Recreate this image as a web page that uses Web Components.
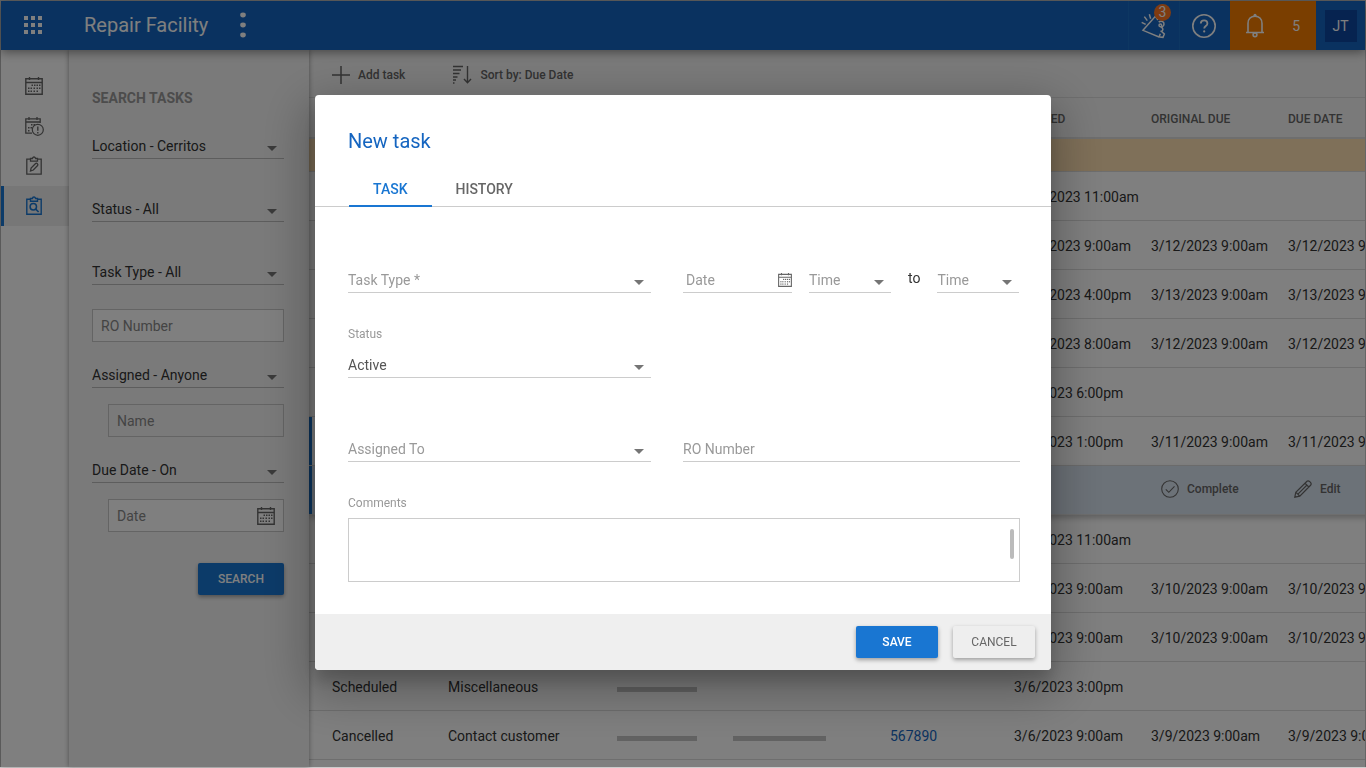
<!DOCTYPE html>
<html lang="en">
<head>
    <meta charset="utf-8">
    <meta name="viewport" content="width=device-width, initial-scale=1">
    <title>Repair Facility</title>
    <style>
        html, body {
            height: 100%;
            margin: 0;
            overflow: hidden;
            font-family: Roboto, "Liberation Sans", sans-serif;
            font-size: 14px;
            color: #333;
        }
    </style>
</head>
<body>
    <repair-app></repair-app>

    <script>
        const dots = (points) => points.map(([x, y]) => `<rect x="${x}" y="${y}" width="1.5" height="1.5" fill="currentColor" stroke="none"/>`).join('')

        // name: [viewBox, width, height, markup]
        const ICONS = {
            apps: ['0 0 18 18', 18, 18, [0, 7, 14].map(y => [0, 7, 14].map(x => `<rect x="${x}" y="${y}" width="4" height="4" fill="currentColor" stroke="none"/>`).join('')).join('')],
            more: ['0 0 6 26', 6, 26, '<g fill="currentColor" stroke="none"><ellipse cx="3" cy="3" rx="2.8" ry="2.4"/><ellipse cx="3" cy="13" rx="2.8" ry="2.4"/><ellipse cx="3" cy="23" rx="2.8" ry="2.4"/></g>'],
            megaphone: ['60 36 78 81', 26, 27, '<g stroke-width="4.5"><path d="M114 60 106 49 69 91l48 20 4-10"/><path d="M116 66c8-5 17-1 16 7 0 4-3 7-7 9 5 4 5 10-1 12l9 8-4 10-10-1"/><circle cx="121" cy="76" r="4"/><path d="m88 43 4 13M73 50l9 12M65 67l12 6"/></g>'],
            help: ['0 0 24 24', 24, 24, '<circle cx="12" cy="12" r="11.2" stroke-width="1.6"/><path d="M8.8 9.6c0-4.4 6.6-4.2 6.6-.2 0 2.6-3.2 2.6-3.2 5.2" stroke-width="1.8"/><circle cx="12.2" cy="17.4" r="1.1" fill="currentColor" stroke="none"/>'],
            bell: ['0 0 20 25', 20, 25, '<g stroke-width="1.6"><path d="M1 19.5h18M3 19V10.5C3 6 6 3.2 10 3.2S17 6 17 10.500V19"/><circle cx="10" cy="21.800" r="1.900"/></g><circle cx="10" cy="2.200" r="1.500" fill="currentColor" stroke="none"/>'],
            calendar: ['0 0 18 18', 18, 18, '<path d="M.8 1.800h16.400v15.400H.8zM.8 5.500h16.400M4.500 0v3M13.500 0v3" stroke-width="1.4"/>' + dots([[6.5, 7.5], [9, 7.5], [11.5, 7.5], [14, 7.5], [3, 10.5], [5.5, 10.5], [8.5, 10.5], [11.5, 10.5], [14, 10.5], [3, 13.5], [5.5, 13.5], [8.5, 13.5], [11.5, 13.5]])],
            calendarAlert: ['0 0 19 19', 19, 19, '<path d="M7 16.200H.8V1.800h14.400V6M.8 5h14.400M4 0v3M12 0v3" stroke-width="1.300"/>' + dots([[6, 7], [8.500, 7], [3, 10], [5.500, 10], [3, 13]]) + '<circle cx="12.800" cy="12.800" r="5.500" stroke-width="1.200"/><path d="M12.800 9.500v4.200M12.800 15v1.500" stroke-width="1.400"/>'],
            clipboardEdit: ['0 0 16 18', 16, 18, '<path d="M4.500 2.200H.8v15h14.400v-15h-3.700M4.500 1.500v2.700h7V1.500H9.500a1.500 1.500 0 0 0-3 0zM4.500 14l.6-3 4.500-4.500c1-1 3 1 2 2L7.300 13z" stroke-width="1.300"/>'],
            clipboardSearch: ['0 0 16 18', 16, 18, '<path d="M4.500 2.200H.8v15h14.400v-15h-3.700M4.500 1.500v2.700h7V1.500H9.500a1.500 1.500 0 0 0-3 0z" stroke-width="1.400"/><circle cx="7.300" cy="9.800" r="3.200" stroke-width="1.500"/><path d="m9.600 12 3 3" stroke-width="1.700"/>'],
            plus: ['0 0 18 18', 18, 18, '<path d="M9 0v18M0 9h18" stroke-width="1.500"/>'],
            sort: ['0 0 19 19', 19, 19, '<path d="M0 1.500h10M0 5h8M0 8.500h6.500M0 12h4.500M0 15h3M0 18h1.500" stroke-width="1.300"/><path d="M14.500 1v16.500M11 14l3.500 3.700L18 14" stroke-width="1.400"/>'],
            check: ['0 0 18 18', 18, 18, '<circle cx="9" cy="9" r="8.300" stroke-width="1.100"/><path d="m4.800 9.300 3 3 5.700-6" stroke-width="1.100"/>'],
            pencil: ['0 0 18 18', 18, 18, '<path d="m.8 17.200 1-5L13 1.200c1.600-1.400 5.200 2 3.800 3.800L5.800 16.200zM11 3.200l3.800 3.800M1.800 12.200l4 4M4.200 13.800 13 5" stroke-width="1.200"/>'],
            caret: ['0 0 10 5', 10, 5, '<path d="M0 0h10L5 5z" fill="currentColor" stroke="none"/>']
        }

        class AppIcon extends HTMLElement {
            constructor() {
                super()
                this.attachShadow({ mode: 'open' })
            }

            connectedCallback() {
                const [box, width, height, markup] = ICONS[this.getAttribute('name')]
                const size = Number(this.getAttribute('size')) || width
                this.shadowRoot.innerHTML = `
                    <style>
                        :host { display: inline-flex; flex: none; }
                        svg { display: block; fill: none; stroke: currentColor; overflow: visible; }
                    </style>
                    <svg viewBox="${box}" width="${size}" height="${size * height / width}" aria-hidden="true">${markup}</svg>
                `
            }
        }
        customElements.define('app-icon', AppIcon)

        class AppButton extends HTMLElement {
            constructor() {
                super()
                this.attachShadow({ mode: 'open' })
            }

            connectedCallback() {
                this.shadowRoot.innerHTML = `
                    <style>
                        :host { display: inline-flex; }
                        button {
                            min-width: var(--button-width, 82px);
                            height: 32px;
                            padding: 0 12px;
                            border: none;
                            border-radius: 2px;
                            background: #1976d2;
                            color: #fff;
                            font: 500 12px/16px Roboto, sans-serif;
                            box-shadow: 0 2px 4px rgba(0, 0, 0, 0.35);
                            cursor: pointer;
                        }
                        :host([plain]) button {
                            background: #eee;
                            color: #666;
                            font-weight: 400;
                        }
                    </style>
                    <button type="button"><slot></slot></button>
                `
            }
        }
        customElements.define('app-button', AppButton)

        class SelectField extends HTMLElement {
            constructor() {
                super()
                this.attachShadow({ mode: 'open' })
            }

            connectedCallback() {
                const label = this.getAttribute('label')
                const caption = this.hasAttribute('caption')
                this.shadowRoot.innerHTML = `
                    <style>
                        :host { display: block; }
                        label { display: block; font-size: 12px; line-height: 16px; margin-bottom: 11px; color: #999; }
                        .box {
                            display: grid;
                            align-items: center;
                            border-bottom: 1px solid var(--line, #ccc);
                        }
                        select {
                            grid-area: 1 / 1;
                            appearance: none;
                            width: 100%;
                            height: 24px;
                            padding: 0 20px 0 0;
                            border: none;
                            background: none;
                            color: inherit;
                            font: 400 14px/20px Roboto, sans-serif;
                        }
                        :host([empty]) select { color: #999; }
                        app-icon {
                            grid-area: 1 / 1;
                            justify-self: end;
                            margin: 4px 7px 0 0;
                            color: #757575;
                            pointer-events: none;
                        }
                    </style>
                    ${caption ? `<label for="field">${label}</label>` : ''}
                    <div class="box">
                        <select id="field" ${caption ? '' : `aria-label="${label}"`}>
                            <option>${this.getAttribute('value')}</option>
                        </select>
                        <app-icon name="caret"></app-icon>
                    </div>
                `
            }
        }
        customElements.define('select-field', SelectField)

        class TextField extends HTMLElement {
            constructor() {
                super()
                this.attachShadow({ mode: 'open' })
            }

            connectedCallback() {
                const label = this.getAttribute('label')
                this.shadowRoot.innerHTML = `
                    <style>
                        :host {
                            display: flex;
                            align-items: center;
                            box-sizing: border-box;
                            height: 25px;
                            border-bottom: 1px solid #ccc;
                        }
                        :host([boxed]) {
                            height: 33px;
                            padding: 0 8px;
                            border: 1px solid #c8c8c8;
                            background: #fff;
                        }
                        :host([disabled]) { background: none; }
                        input {
                            flex: 1;
                            min-width: 0;
                            padding: 0;
                            border: none;
                            background: none;
                            outline: none;
                            color: inherit;
                            font: 400 14px/20px Roboto, sans-serif;
                        }
                        input::placeholder { color: #999; opacity: 1; }
                        :host([boxed]) input::placeholder { color: #888; }
                        ::slotted(app-icon) { color: #666; }
                    </style>
                    <input type="text" placeholder="${label}" aria-label="${label}">
                    <slot></slot>
                `
            }
        }
        customElements.define('text-field', TextField)

        class AppHeader extends HTMLElement {
            constructor() {
                super()
                this.attachShadow({ mode: 'open' })
            }

            connectedCallback() {
                this.shadowRoot.innerHTML = `
                    <style>
                        :host {
                            display: flex;
                            align-items: stretch;
                            height: 49px;
                            background: #1565c0;
                            color: #fff;
                            box-shadow: 0 2px 10px rgba(0, 0, 0, 0.45);
                            z-index: 2;
                        }
                        button {
                            display: flex;
                            align-items: center;
                            justify-content: center;
                            padding: 0;
                            border: none;
                            background: none;
                            color: inherit;
                            font: 400 14px/20px Roboto, sans-serif;
                            cursor: pointer;
                        }
                        .brand { display: flex; align-items: center; flex: 1; padding: 0 0 2px 23px; }
                        h1 { margin: 0 32px 0 42px; font-size: 20px; line-height: 28px; font-weight: 400; }
                        .tool { position: relative; width: 51px; padding-right: 2px; border-left: 1px solid #1a6fc4; box-sizing: border-box; }
                        .badge {
                            position: absolute;
                            top: 3px;
                            right: 8px;
                            width: 17px;
                            height: 17px;
                            border-radius: 50%;
                            background: #ff7722;
                            font-size: 14px;
                            line-height: 17px;
                            text-align: center;
                        }
                        .alerts { width: 86px; padding: 0 16px 0 15px; background: #f57c00; justify-content: space-between; }
                        .user { width: 49px; }
                        .user span { width: 32px; line-height: 32px; background: #0d47a1; }
                    </style>
                    <div class="brand">
                        <button type="button" aria-label="Apps"><app-icon name="apps"></app-icon></button>
                        <h1>Repair Facility</h1>
                        <button type="button" aria-label="More"><app-icon name="more"></app-icon></button>
                    </div>
                    <button type="button" class="tool" aria-label="Announcements"><app-icon name="megaphone"></app-icon><span class="badge">3</span></button>
                    <button type="button" class="tool" aria-label="Help"><app-icon name="help"></app-icon></button>
                    <button type="button" class="alerts" aria-label="Notifications"><app-icon name="bell"></app-icon><span>5</span></button>
                    <button type="button" class="user"><span>JT</span></button>
                `
            }
        }
        customElements.define('app-header', AppHeader)

        class SideRail extends HTMLElement {
            constructor() {
                super()
                this.attachShadow({ mode: 'open' })
            }

            connectedCallback() {
                this.shadowRoot.innerHTML = `
                    <style>
                        :host {
                            display: block;
                            width: 68px;
                            padding-top: 16px;
                            background: #fff;
                            color: #666;
                            box-shadow: 0 0 6px rgba(0, 0, 0, 0.25);
                            z-index: 1;
                        }
                        nav { display: flex; flex-direction: column; }
                        a {
                            display: flex;
                            align-items: center;
                            justify-content: center;
                            height: 40px;
                            padding-right: 2px;
                            color: inherit;
                        }
                        a.active {
                            box-shadow: inset 3px 0 #1976d2;
                            background: #eee;
                            color: #1976d2;
                        }
                    </style>
                    <nav>
                        <a href="#calendar" aria-label="Calendar"><app-icon name="calendar"></app-icon></a>
                        <a href="#overdue" aria-label="Overdue"><app-icon name="calendarAlert"></app-icon></a>
                        <a href="#notes" aria-label="Notes"><app-icon name="clipboardEdit"></app-icon></a>
                        <a href="#tasks" aria-label="Tasks" class="active"><app-icon name="clipboardSearch"></app-icon></a>
                    </nav>
                `
            }
        }
        customElements.define('side-rail', SideRail)

        class SearchPanel extends HTMLElement {
            constructor() {
                super()
                this.attachShadow({ mode: 'open' })
            }

            connectedCallback() {
                this.shadowRoot.innerHTML = `
                    <style>
                        :host {
                            display: block;
                            box-sizing: border-box;
                            width: 240px;
                            padding: 38px 25px 38px 23px;
                            background: #f5f5f5;
                            box-shadow: 0 0 5px rgba(0, 0, 0, 0.4);
                            --line: #bbb;
                            --button-width: 86px;
                        }
                        h2 { margin: 0 0 26px; font-size: 14px; line-height: 20px; font-weight: 700; color: #999; }
                        form { display: flex; flex-direction: column; }
                        .wide { margin-bottom: 38px; }
                        .near { margin-bottom: 24px; }
                        .box { margin-bottom: 21px; }
                        .parent { margin-bottom: 16px; }
                        .child { margin-left: 16px; }
                        .last { margin-bottom: 31px; }
                        app-button { align-self: flex-end; }
                    </style>
                    <h2>SEARCH TASKS</h2>
                    <form>
                        <select-field class="wide" label="Location" value="Location - Cerritos"></select-field>
                        <select-field class="wide" label="Status" value="Status - All"></select-field>
                        <select-field class="near" label="Task Type" value="Task Type - All"></select-field>
                        <text-field class="box" boxed label="RO Number"></text-field>
                        <select-field class="parent" label="Assigned" value="Assigned - Anyone"></select-field>
                        <text-field class="box child" boxed disabled label="Name"></text-field>
                        <select-field class="parent" label="Due Date" value="Due Date - On"></select-field>
                        <text-field class="child last" boxed label="Date"><app-icon name="calendar"></app-icon></text-field>
                        <app-button>SEARCH</app-button>
                    </form>
                `
            }
        }
        customElements.define('search-panel', SearchPanel)

        const TASKS = [
            { created: '3/12/2023 11:00am' },
            { created: '3/12/2023 9:00am', due: '3/12/2023 9:00am' },
            { created: '3/11/2023 4:00pm', due: '3/13/2023 9:00am' },
            { created: '3/11/2023 8:00am', due: '3/12/2023 9:00am' },
            { created: '3/9/2023 6:00pm' },
            { created: '3/9/2023 1:00pm', due: '3/11/2023 9:00am', selected: true },
            { created: '3/9/2023 11:00am' },
            { created: '3/9/2023 9:00am', due: '3/10/2023 9:00am' },
            { created: '3/8/2023 9:00am', due: '3/10/2023 9:00am' },
            { status: 'Scheduled', type: 'Miscellaneous', customer: true, created: '3/6/2023 3:00pm' },
            { status: 'Cancelled', type: 'Contact customer', customer: true, vehicle: true, ro: '567890', created: '3/6/2023 9:00am', due: '3/9/2023 9:00am' },
            {}
        ]

        class TaskBoard extends HTMLElement {
            constructor() {
                super()
                this.attachShadow({ mode: 'open' })
            }

            connectedCallback() {
                this.shadowRoot.innerHTML = `
                    <style>
                        :host { display: block; flex: 1; min-width: 0; overflow: hidden; background: #fff; }
                        .toolbar {
                            display: flex;
                            align-items: center;
                            gap: 48px;
                            box-sizing: border-box;
                            height: 48px;
                            padding: 2px 23px 0;
                            background: #f5f5f5;
                            border-bottom: 1px solid #ddd;
                        }
                        button {
                            display: inline-flex;
                            align-items: center;
                            gap: 8px;
                            padding: 0;
                            border: none;
                            background: none;
                            color: #666;
                            font: 500 12px/16px Roboto, sans-serif;
                            cursor: pointer;
                        }
                        table { table-layout: fixed; width: 1093px; border-collapse: separate; border-spacing: 0; }
                        th, td {
                            box-sizing: border-box;
                            height: 49px;
                            padding: 2px 0 0 23px;
                            border-bottom: 1px solid #ddd;
                            text-align: left;
                            white-space: nowrap;
                        }
                        th { height: 41px; background: #f5f5f5; font-size: 12px; font-weight: 500; color: #666; border-bottom: 2px solid #ddd; }
                        .group td { height: 33px; background: #ffe0b2; }
                        .redacted { display: block; width: 80px; height: 5px; margin-top: 4px; background: #c4c4c4; }
                        .redacted.long { width: 93px; }
                        a { color: #1565c0; text-decoration: none; }
                        .selected td:first-child { box-shadow: inset 3px 0 #1976d2; }
                        .actions td { padding-top: 0; background: #d9e4f0; }
                        .actions { box-shadow: 0 3px 6px rgba(0, 0, 0, 0.25); }
                        .actions td.done { padding-left: 33px; }
                        .actions td.edit { padding-left: 29px; }
                    </style>
                    <div class="toolbar">
                        <button type="button"><app-icon name="plus"></app-icon>Add task</button>
                        <button type="button"><app-icon name="sort"></app-icon>Sort by: Due Date</button>
                    </div>
                    <table>
                        <colgroup>${[116, 169, 116, 157, 124, 137, 137, 137].map(w => `<col style="width: ${w}px">`).join('')}</colgroup>
                        <thead>
                            <tr><th></th><th></th><th></th><th></th><th></th><th>CREATED</th><th>ORIGINAL DUE</th><th>DUE DATE</th></tr>
                        </thead>
                        <tbody>
                            <tr class="group"><td colspan="8"></td></tr>
                            ${TASKS.map(task => this.#row(task)).join('')}
                        </tbody>
                    </table>
                `
            }

            #row(task) {
                const actions = `
                    <tr class="actions selected">
                        <td colspan="6"></td>
                        <td class="done"><button type="button"><app-icon name="check"></app-icon>Complete</button></td>
                        <td class="edit"><button type="button"><app-icon name="pencil"></app-icon>Edit</button></td>
                    </tr>
                `
                return `
                    <tr class="${task.selected ? 'selected' : ''}">
                        <td>${task.status || ''}</td>
                        <td>${task.type || ''}</td>
                        <td>${task.customer ? '<span class="redacted"></span>' : ''}</td>
                        <td>${task.vehicle ? '<span class="redacted long"></span>' : ''}</td>
                        <td>${task.ro ? `<a href="#${task.ro}">${task.ro}</a>` : ''}</td>
                        <td>${task.created || ''}</td>
                        <td>${task.due || ''}</td>
                        <td>${task.due || ''}</td>
                    </tr>
                    ${task.selected ? actions : ''}
                `
            }
        }
        customElements.define('task-board', TaskBoard)

        class TaskDialog extends HTMLElement {
            constructor() {
                super()
                this.attachShadow({ mode: 'open' })
            }

            connectedCallback() {
                this.shadowRoot.innerHTML = `
                    <style>
                        :host {
                            position: fixed;
                            inset: 0 0 1px;
                            z-index: 10;
                            display: flex;
                            justify-content: center;
                            align-items: flex-start;
                            padding-top: 95px;
                            background: rgba(0, 0, 0, 0.5);
                        }
                        section {
                            width: 736px;
                            max-width: 100%;
                            border-radius: 4px;
                            overflow: hidden;
                            background: #fff;
                            box-shadow: 0 11px 15px rgba(0, 0, 0, 0.15), 0 16px 48px 8px rgba(0, 0, 0, 0.28);
                        }
                        h2 { margin: 32px 33px 15px; font-size: 20px; line-height: 28px; font-weight: 400; color: #1565c0; }
                        .tabs { display: flex; padding: 0 34px; border-bottom: 1px solid #ccc; }
                        .tabs button {
                            height: 37px;
                            margin-bottom: -1px;
                            padding: 0 24px;
                            border: none;
                            background: none;
                            color: #666;
                            font: 500 14px/20px Roboto, sans-serif;
                            cursor: pointer;
                        }
                        .tabs button[aria-selected=true] { color: #1976d2; box-shadow: inset 0 -2px #1976d2; }
                        form {
                            display: grid;
                            grid-template-columns: 303px 1fr;
                            column-gap: 32px;
                            padding: 61px 32px 32px 33px;
                            --line: #ccc;
                        }
                        .when { display: grid; grid-template-columns: 109px 82px 1fr 82px; column-gap: 17px; align-items: end; padding-right: 1px; }
                        .when > span { line-height: 20px; padding-bottom: 5px; color: #333; }
                        .when text-field { box-sizing: border-box; padding-left: 3px; }
                        .status { margin-top: 33px; grid-column: 1; color: #555; }
                        .assigned { margin-top: 59px; grid-column: 1; }
                        .ro { margin-top: 59px; }
                        .comments { grid-column: 1 / -1; margin-top: 33px; }
                        .comments label { display: block; margin-bottom: 7px; font-size: 12px; line-height: 16px; color: #999; }
                        .area { position: relative; }
                        textarea {
                            display: block;
                            box-sizing: border-box;
                            width: 100%;
                            height: 64px;
                            padding: 8px;
                            border: 1px solid #ccc;
                            resize: none;
                            font: 400 14px/20px Roboto, sans-serif;
                        }
                        .thumb { position: absolute; top: 11px; right: 6px; width: 4px; height: 30px; border-radius: 2px; background: #bbb; }
                        footer { display: flex; justify-content: flex-end; gap: 15px; padding: 12px 16px; background: #efefef; }
                    </style>
                    <section role="dialog" aria-labelledby="title">
                        <h2 id="title">New task</h2>
                        <div class="tabs" role="tablist">
                            <button type="button" role="tab" aria-selected="true">TASK</button>
                            <button type="button" role="tab" aria-selected="false">HISTORY</button>
                        </div>
                        <form>
                            <select-field empty label="Task Type" value="Task Type *"></select-field>
                            <div class="when">
                                <text-field label="Date"><app-icon name="calendar" size="14"></app-icon></text-field>
                                <select-field empty label="Start time" value="Time"></select-field>
                                <span>to</span>
                                <select-field empty label="End time" value="Time"></select-field>
                            </div>
                            <select-field class="status" caption label="Status" value="Active"></select-field>
                            <select-field class="assigned" empty label="Assigned To" value="Assigned To"></select-field>
                            <text-field class="ro" label="RO Number"></text-field>
                            <div class="comments">
                                <label for="comments">Comments</label>
                                <div class="area">
                                    <textarea id="comments"></textarea>
                                    <div class="thumb"></div>
                                </div>
                            </div>
                        </form>
                        <footer>
                            <app-button>SAVE</app-button>
                            <app-button plain>CANCEL</app-button>
                        </footer>
                    </section>
                `
            }
        }
        customElements.define('task-dialog', TaskDialog)

        class RepairApp extends HTMLElement {
            constructor() {
                super()
                this.attachShadow({ mode: 'open' })
            }

            connectedCallback() {
                this.shadowRoot.innerHTML = `
                    <style>
                        :host {
                            display: flex;
                            flex-direction: column;
                            box-sizing: border-box;
                            height: 100vh;
                            border: 1px solid #ccc;
                        }
                        main { display: flex; flex: 1; min-height: 0; }
                        search-panel { z-index: 1; }
                    </style>
                    <app-header></app-header>
                    <main>
                        <side-rail></side-rail>
                        <search-panel></search-panel>
                        <task-board></task-board>
                    </main>
                    <task-dialog></task-dialog>
                `
            }
        }
        customElements.define('repair-app', RepairApp)
    </script>
</body>
</html>
